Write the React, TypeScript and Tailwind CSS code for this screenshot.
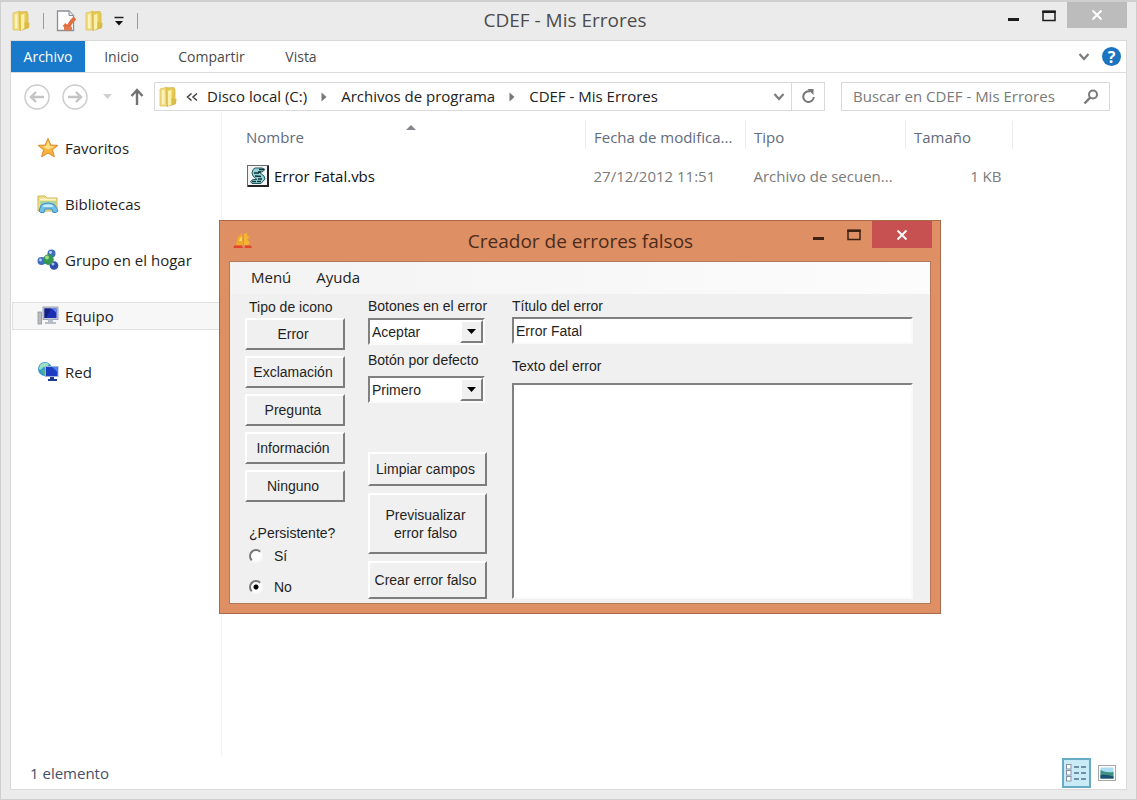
import { useState, type ReactNode } from "react";

const raised =
  "border-2 border-t-white border-l-white border-r-[#7d7d7d] border-b-[#7d7d7d] bg-[#f0f0f0]";
const sunken =
  "border-2 border-t-[#808080] border-l-[#808080] border-r-[#fafafa] border-b-[#fafafa] bg-white";

function FolderIcon() {
  return (
    <svg width="20" height="22" viewBox="0 0 20 22" aria-hidden="true">
      <path d="M2 3 L9 1 L9 20 L2 20 Z" fill="#f1dc7c" stroke="#dcc368" strokeWidth="0.8" />
      <path d="M8 2 L16 1.5 L17 4 L17 18 L9 20.5 Z" fill="#e6c94f" stroke="#d3b552" strokeWidth="0.8" />
      <path d="M10 5 L13.5 3.5 L13.5 18 L10 20.5 Z" fill="#fbf0a8" />
      <path d="M4 4.5 L6.5 4 L6.5 18.5 L4 18.5 Z" fill="#fbf2bd" />
      <path d="M13.5 12 L18.5 13 L18 18 L13.5 19 Z" fill="#d9bb46" />
    </svg>
  );
}

function PropertiesIcon() {
  return (
    <svg width="20" height="22" viewBox="0 0 20 22" aria-hidden="true">
      <path d="M1.5 1 H13 L17.5 5.5 V20.5 H1.5 Z" fill="#fdfdfd" stroke="#8b8f96" strokeWidth="1.3" />
      <path d="M13 1 V5.5 H17.5" fill="#dfe3e8" stroke="#8b8f96" />
      <path d="M8 14.5 L12 18 Q14 12 19 8" fill="none" stroke="#de7140" strokeWidth="3.8" />
      <path d="M8 18.500 L16 18.500" stroke="#e07b4e" strokeWidth="3.5" />
    </svg>
  );
}

function StarIcon() {
  return (
    <svg width="22" height="22" viewBox="0 0 22 22" aria-hidden="true">
      <path
        d="M11 1.5 L13.8 8 L20.8 8.4 L15.4 12.8 L17.4 19.8 L11 16 L4.6 19.8 L6.6 12.8 L1.2 8.4 L8.2 8 Z"
        fill="#f8b33a"
        stroke="#d98a2b"
        strokeLinejoin="round"
      />
      <path d="M11 4 L12.8 9 L17.5 9.6 L11 12.5 L5 9.6 L9.2 9 Z" fill="#fde28a" />
    </svg>
  );
}

function LibrariesIcon() {
  return (
    <svg width="22" height="22" viewBox="0 0 22 22" aria-hidden="true">
      <path d="M1 3 H8 L10 5 H20 V18 H1 Z" fill="#f0df83" stroke="#cdb75a" />
      <path d="M3 6.500 H19" stroke="#fbf5c8" strokeWidth="1.500" />
      <rect x="3" y="8" width="16" height="3" fill="#a8d5a2" />
      <path d="M4 12 Q11 8 18 12 L21 18 Q20 20 16 19.5 L15 16 H8 L7 19.5 Q3 20.5 2 18 Z" fill="#70bfe8" stroke="#3f8ec4" />
      <path d="M6 12.500 Q11 10 16 12.500 L16 14 H6 Z" fill="#c6ebfa" />
    </svg>
  );
}

function HomegroupIcon() {
  return (
    <svg width="22" height="22" viewBox="0 0 22 22" aria-hidden="true">
      <path d="M14 4 L4 12 L16 17 Z" fill="none" stroke="#8fa8cc" strokeWidth="2" />
      <circle cx="14.500" cy="4.500" r="4" fill="#4270bd" />
      <circle cx="4.500" cy="12" r="4" fill="#3e70bf" />
      <circle cx="17" cy="16.500" r="4.300" fill="#2b4fa8" />
      <circle cx="11.500" cy="10.500" r="5.200" fill="#35984c" />
      <circle cx="10" cy="8.500" r="2" fill="#9bdb94" />
      <circle cx="13.500" cy="3.500" r="1.400" fill="#bcd5f4" />
      <circle cx="3.500" cy="11" r="1.400" fill="#b4d2f5" />
      <circle cx="16" cy="15" r="1.500" fill="#a6c1f1" />
    </svg>
  );
}

function ComputerIcon() {
  return (
    <svg width="22" height="22" viewBox="0 0 22 22" aria-hidden="true">
      <rect x="1" y="7" width="3.500" height="12" fill="#b8bcbe" stroke="#8e9394" strokeWidth="0.8" />
      <rect x="6" y="2" width="15" height="12.500" fill="#c3cad8" stroke="#8d96ac" strokeWidth="0.8" />
      <rect x="7.500" y="3.500" width="12" height="9.500" fill="#1b2fb4" />
      <path d="M7.500 3.500 H14 L9 13 H7.500 Z" fill="#13207d" />
      <path d="M15 3.500 H19.500 V8 Z" fill="#5f86ee" />
      <path d="M11 14.500 H16 V17 H19 V19 H8 V17 H11 Z" fill="#b7bec9" />
    </svg>
  );
}

function NetworkIcon() {
  return (
    <svg width="22" height="22" viewBox="0 0 22 22" aria-hidden="true">
      <circle cx="8" cy="8" r="7" fill="#3a9ccb" />
      <path d="M3 4 Q8 0 12 3 Q10 7 6 6 Q4 10 2 8 Z" fill="#9fe0c2" />
      <path d="M5 9 Q9 9 9 14 Q6 14 5 9 Z" fill="#5dbb70" />
      <rect x="8.500" y="5.500" width="12.500" height="10" fill="#1d3cc4" stroke="#9fb2d6" />
      <path d="M15 6 H20.500 V11 Z" fill="#4f7cf0" />
      <path d="M13 16 H17 V18 H20 V20 H11 V18 H13 Z" fill="#1e3a8d" />
    </svg>
  );
}

function ScriptIcon() {
  return (
    <svg width="22" height="22" viewBox="0 0 22 22" aria-hidden="true">
      <rect x="0.5" y="0.5" width="21" height="21" fill="#f4f4f4" stroke="#6a6a6a" />
      <path d="M21 1 V21 H1" fill="none" stroke="#222" strokeWidth="2" />
      <path
        d="M8 3 H15 L18 4.500 L15 7 H12 L17 11 L18 14 L14 18.500 H5 L3.500 16.500 L6 14.500 H10 L6 11 L5 8 L6 4.500 Z"
        fill="#8fd3d6"
        stroke="#27575e"
      />
      <path d="M12 4.500 H17 M14 7 L11 7 M7 8 L12 8 M8 11 L14 11.500 M5 16.500 H9 M11 14 L15 14 M10 16.500 L14 16.500" stroke="#14343b" strokeWidth="1.300" />
    </svg>
  );
}

function AppIcon() {
  return (
    <svg width="20" height="18" viewBox="0 0 20 18" aria-hidden="true">
      <path d="M3 13 L5 5 L9 1 L10 13 Z" fill="#f3a928" />
      <path d="M11 2 L14 1 L14 4 L17 5 L14 7 L17 11 L15 13 H11 Z" fill="#f6b52e" />
      <path d="M7 6 L9 4 V9 H6 Z" fill="#fad85a" />
      <path d="M1 13.500 H9 L10 16 H0.500 Z M12 13.500 H18 L19 16 H11.500 Z" fill="#e2452b" />
    </svg>
  );
}

function ChevronDown() {
  return (
    <svg width="12" height="10" viewBox="0 0 12 10" aria-hidden="true">
      <path d="M1.500 2 L6 7 L10.500 2" fill="none" stroke="#7d7d7d" strokeWidth="2.200" />
    </svg>
  );
}

function CrumbArrow() {
  return (
    <svg width="6" height="10" viewBox="0 0 6 10" aria-hidden="true">
      <path d="M0.500 0.500 L5.500 5 L0.500 9.500 Z" fill="#777" />
    </svg>
  );
}

function CircleArrow({ forward = false }: { forward?: boolean }) {
  return (
    <svg width="26" height="26" viewBox="0 0 26 26" aria-hidden="true">
      <circle cx="13" cy="13" r="12" fill="none" stroke="#cccccc" strokeWidth="1.500" />
      <path
        d={forward ? "M6 13 H19 M14 8 L19 13 L14 18" : "M20 13 H7 M12 8 L7 13 L12 18"}
        fill="none"
        stroke="#c4c4c4"
        strokeWidth="2.400"
      />
    </svg>
  );
}

function WindowControls({ dialog = false }: { dialog?: boolean }) {
  const ink = dialog ? "#3f2213" : "#1c1c1c";
  return (
    <div className="flex flex-1 items-start justify-end">
      <button aria-label="Minimizar" className="flex h-7 w-9 items-center justify-center">
        <svg width="12" height="14" viewBox="0 0 12 14" aria-hidden="true">
          <rect x="1" y="9" width="11" height="3" fill={ink} />
        </svg>
      </button>
      <button aria-label="Maximizar" className="flex h-7 w-9 items-center justify-center">
        <svg width="14" height="12" viewBox="0 0 14 12" aria-hidden="true">
          <rect x="1" y="1.500" width="12" height="9" fill="none" stroke={ink} strokeWidth="1.500" />
          <rect x="0.300" y="0.500" width="13.400" height="2.500" fill={ink} />
        </svg>
      </button>
      <button
        aria-label="Cerrar"
        className={
          dialog
            ? "flex h-[27px] w-[60px] items-center justify-center bg-[#c75050]"
            : "flex h-[26px] w-[60px] items-center justify-center bg-[#bcbcbc]"
        }
      >
        <svg width="12" height="12" viewBox="0 0 12 12" aria-hidden="true">
          <path d="M1.500 1.500 L10.500 10.500 M10.500 1.500 L1.500 10.500" stroke="#fff" strokeWidth="1.900" />
        </svg>
      </button>
    </div>
  );
}

const places: { name: string; icon: ReactNode }[] = [
  { name: "Favoritos", icon: <StarIcon /> },
  { name: "Bibliotecas", icon: <LibrariesIcon /> },
  { name: "Grupo en el hogar", icon: <HomegroupIcon /> },
  { name: "Equipo", icon: <ComputerIcon /> },
  { name: "Red", icon: <NetworkIcon /> },
];

function Explorer() {
  return (
    <div className="flex min-h-screen flex-col border border-t-2 border-[#cfcfcf] bg-[#ebebeb] px-[9px] pb-[9px] font-['Open_Sans',sans-serif] text-[15px] text-[#2a2a2a]">
      <header className="flex h-[38px] items-start">
        <div className="flex h-[38px] flex-1 items-center pl-px">
          <FolderIcon />
          <span className="ml-3 h-4 w-px bg-[#9b9b9b]" />
          <button aria-label="Propiedades" className="ml-3"><PropertiesIcon /></button>
          <button aria-label="Nueva carpeta" className="ml-2"><FolderIcon /></button>
          <button aria-label="Personalizar barra" className="ml-[9px]">
            <svg width="12" height="12" viewBox="0 0 12 12" aria-hidden="true">
              <path d="M1.500 2.500 H10.500" stroke="#222" strokeWidth="1.500" />
              <path d="M2 6 H10 L6 10.500 Z" fill="#111" />
            </svg>
          </button>
          <span className="ml-3 h-4 w-px bg-[#9b9b9b]" />
        </div>
        <h1 className="mr-2 text-[19px] leading-9 text-[#4c4c4c]">CDEF - Mis Errores</h1>
        <WindowControls />
      </header>

      <div className="flex flex-1 flex-col border border-[#dadada] bg-white">
        <nav className="flex h-8 items-stretch border-b border-[#dcdcdc] text-sm text-[#4a4a4a]">
          <button className="w-[74px] bg-[#1979ca] text-white">Archivo</button>
          <button className="w-[73px]">Inicio</button>
          <button className="w-[107px]">Compartir</button>
          <button className="w-[72px]">Vista</button>
          <div className="ml-auto flex items-center gap-3 pr-[5px]">
            <button aria-label="Expandir cinta"><ChevronDown /></button>
            <button aria-label="Ayuda" className="flex size-[19px] items-center justify-center rounded-full bg-[#1a74c2] text-base font-bold text-white">
              ?
            </button>
          </div>
        </nav>

        <div className="flex items-center pt-[9px] pr-4 pl-[13px]">
          <button aria-label="Atrás"><CircleArrow /></button>
          <button aria-label="Adelante" className="ml-3"><CircleArrow forward /></button>
          <button aria-label="Ubicaciones recientes" className="ml-[15px]">
            <svg width="9" height="5" viewBox="0 0 9 5" aria-hidden="true"><path d="M0 0 H9 L4.500 5 Z" fill="#cfcfcf" /></svg>
          </button>
          <button aria-label="Subir" className="ml-[18px]">
            <svg width="14" height="18" viewBox="0 0 14 18" aria-hidden="true">
              <path d="M7 17 V3 M1.500 8 L7 2 L12.500 8" fill="none" stroke="#727272" strokeWidth="2.400" />
            </svg>
          </button>
          <div className="ml-[10px] flex h-[29px] flex-1 items-center border border-[#d9d9d9] pl-[3px] text-[#222]">
            <FolderIcon />
            <button aria-label="Más ubicaciones" className="mr-[9px] ml-2">
              <svg width="12" height="8" viewBox="0 0 12 8" aria-hidden="true">
                <path d="M5.500 0.500 L1.500 4 L5.500 7.500 M11 0.500 L7 4 L11 7.500" fill="none" stroke="#444" strokeWidth="1.500" />
              </svg>
            </button>
            <ol className="flex flex-1 items-center gap-[14px] whitespace-nowrap">
              <li><a href="#disco">Disco local (C:)</a></li>
              <li><CrumbArrow /></li>
              <li><a href="#programas">Archivos de programa</a></li>
              <li><CrumbArrow /></li>
              <li><a href="#cdef">CDEF - Mis Errores</a></li>
            </ol>
            <button aria-label="Ubicaciones anteriores" className="flex w-6 justify-center"><ChevronDown /></button>
            <button aria-label="Actualizar" className="flex h-full w-[33px] items-center justify-center border-l border-[#d9d9d9]">
              <svg width="15" height="15" viewBox="0 0 15 15" aria-hidden="true">
                <path d="M9 2.600 A5.300 5.300 0 1 0 12.800 8" fill="none" stroke="#757575" strokeWidth="2" />
                <path d="M6.500 0 H12.500 V6 Z" fill="#757575" />
              </svg>
            </button>
          </div>
          <label className="ml-4 flex h-[29px] w-[269px] items-center border border-[#d9d9d9] pr-[10px] pl-[11px]">
            <input
              aria-label="Buscar"
              placeholder="Buscar en CDEF - Mis Errores"
              className="min-w-0 flex-1 outline-none placeholder:text-[#7a7a7a]"
            />
            <svg width="16" height="16" viewBox="0 0 16 16" aria-hidden="true">
              <circle cx="10" cy="5.500" r="4" fill="none" stroke="#7a7a7a" strokeWidth="2" />
              <path d="M7.200 8.500 L1.500 14.500" stroke="#7a7a7a" strokeWidth="2.500" />
            </svg>
          </label>
        </div>

        <div className="flex flex-1">
          <aside className="flex w-[211px] flex-col gap-7 border-r border-[#f4f4f4] pt-[23px] pl-px">
            {places.map((place) => (
              <a
                key={place.name}
                href={"#" + place.name}
                className={
                  place.name === "Equipo"
                    ? "flex h-7 items-center gap-[6px] border border-[#e0e0e0] bg-[#f7f7f7] pl-6 text-[#1e1e1e]"
                    : "flex h-7 items-center gap-[6px] border border-transparent pl-6 text-[#1e1e1e]"
                }
              >
                {place.icon}
                {place.name}
              </a>
            ))}
          </aside>

          <main className="min-w-0 flex-1 pt-[10px]">
            <table className="w-[791px] table-fixed border-collapse text-left whitespace-nowrap">
              <colgroup>
                <col />
                <col className="w-40" />
                <col className="w-40" />
                <col className="w-[107px]" />
              </colgroup>
              <thead>
                <tr className="h-7 text-[#626b7d] [&>th]:border-r [&>th]:border-[#ececec] [&>th]:px-2 [&>th]:pt-1 [&>th]:font-normal">
                  <th className="relative">
                    <span className="pl-4">Nombre</span>
                    <svg className="absolute top-1 left-[184px]" width="10" height="5" viewBox="0 0 10 5" aria-hidden="true">
                      <path d="M0 5 L5 0 L10 5 Z" fill="#83868c" />
                    </svg>
                  </th>
                  <th>Fecha de modifica...</th>
                  <th>Tipo</th>
                  <th>Tamaño</th>
                </tr>
              </thead>
              <tbody>
                <tr className="h-[54px] text-[#7b7b7b] [&>td]:px-2">
                  <td>
                    <span className="flex items-center gap-[5px] pl-[17px] text-[#111]">
                      <ScriptIcon />
                      Error Fatal.vbs
                    </span>
                  </td>
                  <td>27/12/2012 11:51</td>
                  <td>Archivo de secuen...</td>
                  <td className="text-right"><span className="pr-[3px]">1 KB</span></td>
                </tr>
              </tbody>
            </table>
          </main>
        </div>

        <footer className="flex h-8 items-center justify-between pr-[10px] pl-[19px] text-[#44506a]">
          <span>1 elemento</span>
          <div className="flex items-center gap-[7px]">
            <button aria-label="Detalles" className="flex h-[30px] w-[29px] items-center justify-center border-2 border-[#68abc4] bg-[#c9ebf7]">
              <svg width="21" height="18" viewBox="0 0 21 18" aria-hidden="true">
                {[1, 7, 13].map((y) => (
                  <g key={y}>
                    <rect x="0.5" y={y - 0.5} width="4.500" height="4.500" fill="#fff" stroke="#8793a3" />
                    <path d={`M8 ${y + 2} H13 M15 ${y + 2} H20`} stroke="#55718f" strokeWidth="1.500" />
                  </g>
                ))}
              </svg>
            </button>
            <button aria-label="Iconos grandes">
              <svg width="18" height="16" viewBox="0 0 18 16" aria-hidden="true">
                <rect x="0.500" y="0.500" width="17" height="15" fill="#fff" stroke="#a5a5a5" />
                <rect x="2.500" y="2.500" width="13" height="11" fill="#aadcf2" />
                <path d="M2.500 5 Q7 8 15.500 7 V13.500 H2.500 Z" fill="#3f9183" />
                <path d="M2.500 10 Q9 9 15.500 11.500 V13.500 H2.500 Z" fill="#1e4f74" />
              </svg>
            </button>
          </div>
        </footer>
      </div>
    </div>
  );
}

function Combo({ id, options }: { id: string; options: string[] }) {
  return (
    <div className={"relative h-[27px] w-[117px] " + sunken}>
      <select id={id} className="h-full w-full appearance-none pl-[2px] outline-none">
        {options.map((option) => (
          <option key={option}>{option}</option>
        ))}
      </select>
      <span className={"pointer-events-none absolute inset-y-0 right-0 flex w-[23px] items-center justify-center " + raised}>
        <svg width="9" height="5" viewBox="0 0 9 5" aria-hidden="true"><path d="M0 0 H9 L4.500 5 Z" fill="#000" /></svg>
      </span>
    </div>
  );
}

function Radio({ label, checked, onSelect }: { label: string; checked: boolean; onSelect: () => void }) {
  return (
    <label className="flex h-5 items-center gap-[11px]">
      <input
        type="radio"
        name="persistente"
        checked={checked}
        onChange={onSelect}
        className="size-[14px] appearance-none rounded-full border-2 border-t-[#777] border-r-[#f8f8f8] border-b-[#f8f8f8] border-l-[#777] bg-white checked:bg-[radial-gradient(circle,#000_0_2px,#fff_3px)]"
      />
      {label}
    </label>
  );
}

function ErrorCreator() {
  const [persistent, setPersistent] = useState(false);
  const [title, setTitle] = useState("Error Fatal");
  return (
    <section className="absolute top-[220px] left-[219px] w-[722px] border border-[#a8694a] bg-[#de8f63] px-[9px] pb-[9px] text-[#1f1f1f]">
      <header className="-mr-px flex h-10 items-start font-['Open_Sans',sans-serif]">
        <div className="flex h-10 flex-1 items-center pl-1"><AppIcon /></div>
        <h2 className="mr-1 text-[19px] leading-10 text-[#4a2c1c]">Creador de errores falsos</h2>
        <WindowControls dialog />
      </header>
      <div className="border border-[#b5775a] bg-[#f0f0f0]">
        <nav className="flex h-8 items-center gap-[25px] bg-gradient-to-r from-[#f3f3f3] to-[#fcfcfc] pb-[2px] pl-[21px] font-['Open_Sans',sans-serif] text-[15px]">
          <button>Menú</button>
          <button>Ayuda</button>
        </nav>
        <div className="flex pt-[2px] pr-[17px] pb-1 pl-[15px] font-['Liberation_Sans',sans-serif] text-sm">
          <div className="flex w-[100px] flex-col">
            <h3 className="pl-1 leading-[22px]">Tipo de icono</h3>
            <div className="flex flex-col gap-[6px]">
              {["Error", "Exclamación", "Pregunta", "Información", "Ninguno"].map((name) => (
                <button key={name} className={"h-8 pr-1 " + raised}>{name}</button>
              ))}
            </div>
            <fieldset className="mt-[21px] pb-[2px] pl-1">
              <legend className="leading-5">¿Persistente?</legend>
              <div className="flex flex-col gap-[11px] pt-[3px]">
                <Radio label="Sí" checked={persistent} onSelect={() => setPersistent(true)} />
                <Radio label="No" checked={!persistent} onSelect={() => setPersistent(false)} />
              </div>
            </fieldset>
          </div>

          <div className="ml-[23px] flex w-[119px] flex-col whitespace-nowrap">
            <label htmlFor="botones" className="mb-[2px] leading-5">Botones en el error</label>
            <Combo id="botones" options={["Aceptar", "Aceptar y cancelar", "Sí y no"]} />
            <label htmlFor="defecto" className="mt-1 mb-1 leading-[23px]">Botón por defecto</label>
            <Combo id="defecto" options={["Primero", "Segundo", "Tercero"]} />
            <div className="mt-auto flex flex-col gap-[7px]">
              <button className={"h-[34px] pr-1 " + raised}>Limpiar campos</button>
              <button className={"h-[61px] pr-1 leading-[18px] " + raised}>
                Previsualizar
                <br />
                error falso
              </button>
              <button className={"h-[38px] pr-1 " + raised}>Crear error falso</button>
            </div>
          </div>

          <div className="ml-[25px] flex min-w-0 flex-1 flex-col">
            <label htmlFor="titulo" className="leading-[21px]">Título del error</label>
            <input
              id="titulo"
              value={title}
              onChange={(event) => setTitle(event.target.value)}
              className={"h-[27px] px-[2px] outline-none " + sunken}
            />
            <label htmlFor="texto" className="mt-3 mb-[7px] leading-5">Texto del error</label>
            <textarea id="texto" className={"flex-1 resize-none px-[2px] outline-none " + sunken} />
          </div>
        </div>
      </div>
    </section>
  );
}

export default function App() {
  return (
    <div className="relative">
      <Explorer />
      <ErrorCreator />
    </div>
  );
}
